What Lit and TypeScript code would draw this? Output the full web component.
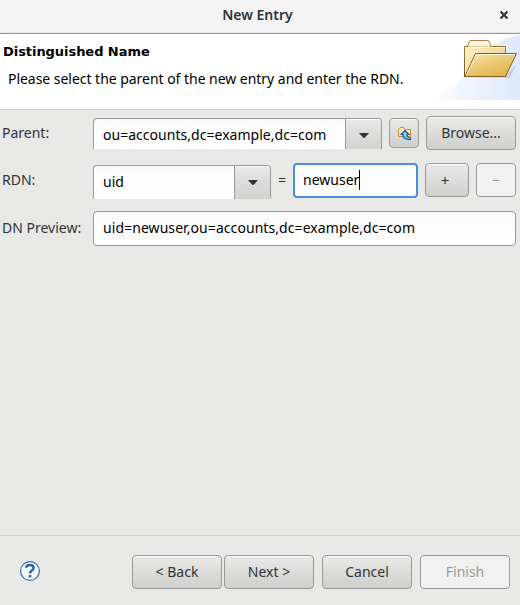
import { LitElement, html, css } from "lit";
import { customElement } from "lit/decorators.js";

const folderIcon = html`<svg class="folder" width="92" height="66" viewBox="-32 0 92 66">
  <defs>
    <linearGradient id="fb" x1="0" y1="0" x2="1" y2="1"><stop offset="0" stop-color="#fff4d2"/><stop offset="1" stop-color="#e9c878"/></linearGradient>
    <linearGradient id="ff" x1="0" y1="0" x2="0.6" y2="1"><stop offset="0" stop-color="#fae8ae"/><stop offset="0.5" stop-color="#edcb77"/><stop offset="1" stop-color="#e2b44e"/></linearGradient>
    <linearGradient id="wash" gradientUnits="userSpaceOnUse" x1="-32" y1="0" x2="60" y2="0"><stop offset="0" stop-color="#f5f8fe" stop-opacity="0"/><stop offset="0.35" stop-color="#f1f5fd"/><stop offset="1" stop-color="#dfe7f9"/></linearGradient>
    <linearGradient id="fl" x1="0" y1="0" x2="0" y2="1"><stop offset="0" stop-color="#a68845"/><stop offset="1" stop-color="#72520f"/></linearGradient>
  </defs>
  <path d="M-32 66V63C-20 61 -8 56 0 46C14 28 34 4 60 1V66Z" fill="url(#wash)"/>
  <path d="M3 43.500H45L57 29L50 44H4Z" fill="#9a8a7a" opacity=".3"/>
  <path d="M4.500 42.500V12.500H7.500L9 8Q9.500 6.500 11 6.500H27.500Q29 6.500 29.500 8L31 12.500H45.500V42.500Z" fill="url(#fb)" stroke="url(#fl)"/>
  <path d="M8.500 11.500L10 8.500Q10.500 7.500 12 7.500H27Q28.500 7.500 29 9L30 11.500Z" fill="#fff8ea"/>
  <path d="M31 12.500H45M5 12.500H8" stroke="#907031"/>
  <path d="M8 12.500H31" stroke="#e6ce91"/>
  <path d="M5.500 41V13.500H44.500" fill="none" stroke="#fff4cf"/>
  <path d="M4.800 42.500L15.500 19.500H56.500L45.500 42.500Z" fill="url(#ff)" stroke="#80601c" stroke-linejoin="round"/>
  <path d="M6.500 41L16.300 20.500H55" fill="none" stroke="#fff9e2"/>
</svg>`;

const parentIcon = html`<svg width="16" height="16" viewBox="0 0 16 16">
  <path d="M1.500 11.500V4L3 2.500H6.500L8 4.500H13.500V11.500Z" fill="#fde6a8" stroke="#cc8b33"/>
  <path d="M2 5.500H13" stroke="#fff8de"/>
  <path d="M8 5.300L12 9.500H10.300V11Q10.600 12.500 13.500 13V14.500Q6.500 15 5.800 11V9.500H4Z" fill="#69b3d4" stroke="#24619c" stroke-width="1.200"/>
  <path d="M8 7.500V11" stroke="#b5e6ef"/>
</svg>`;

const helpIcon = html`<svg width="20" height="20" viewBox="0 0 20 20">
  <circle cx="10" cy="10" r="9.400" fill="#f5f9fc" stroke="#3a70a8" stroke-width="1.200"/>
  <path d="M6.300 6.700V5.500Q7.500 4 10 4Q13.600 4 13.600 6.900Q13.600 8.500 11.700 9.600Q10 10.600 10 12.600" fill="none" stroke="#2866a2" stroke-width="2.400"/>
  <rect x="8.600" y="14" width="2.800" height="2.500" rx=".8" fill="#2866a2"/>
</svg>`;

const arrow = html`<svg width="10" height="5" viewBox="0 0 10 5"><path d="M0 0H10L5.500 5H4.500Z" fill="#2e3436"/></svg>`;

@customElement("app-root")
export class AppRoot extends LitElement {
  static styles = css`
    :host { display: flex; flex-direction: column; width: 520px; height: 605px; background: #e8e8e7; overflow: hidden;
      font: 14px/20px "Noto Sans", sans-serif; color: #2e3436; }
    * { box-sizing: border-box; }
    svg { display: block; flex: none; }
    .title { height: 34px; flex: none; display: grid; grid-template-columns: 1fr auto 1fr; align-items: center; padding: 0 11px 4px 6px;
      background: linear-gradient(#f3f3f3 0 31px, #e2e2e2 33px, #949494 33px); }
    .title b { grid-column: 2; font-weight: 600; }
    .title svg { justify-self: end; }
    .banner { height: 76px; flex: none; display: flex; justify-content: space-between; background: #fff; border-bottom: 1px solid #cfcfcf; color: #000; }
    .copy { padding: 8px 0 0 3px; white-space: nowrap; }
    .heading { font: bold 13px/20px "DejaVu Sans", sans-serif; letter-spacing: -0.05px; }
    .message { padding: 7px 0 0 5px; letter-spacing: -0.035px; }
    .form { flex: 1; padding: 6px 4px 0 2px; }
    .row { display: flex; align-items: flex-start; }
    .row.parent { height: 47px; }
    .row.rdn { height: 48px; }
    .label { width: 91px; flex: none; padding-top: 7px; white-space: nowrap; }
    .field { height: 35px; border: 1px solid #989898; border-radius: 4px; background: linear-gradient(#f6f6f6, #fcfcfc 4px, #fff); color: #000; padding: 6px 9px; white-space: nowrap; }
    .combo { display: flex; margin-top: 2px; border: 1px solid #989898; border-bottom: 0; border-radius: 4px 4px 0 0; background: linear-gradient(#f6f6f6, #fcfcfc 4px, #fff); color: #000; overflow: hidden; }
    .combo.wide { width: 289px; height: 31px; }
    .combo.short { width: 178px; height: 34px; border-radius: 4px 4px 2px 2px; }
    .value { flex: 1; padding: 6px 0 0 9px; white-space: nowrap; letter-spacing: 0.03px; }
    .drop { width: 36px; border-left: 1px solid #989898; display: flex; justify-content: center; padding-top: 14px; background: linear-gradient(#fff 0 1px, #e7e7e6 1px, #cfcfce 34px); }
    .btn { height: 34px; flex: none; display: flex; justify-content: center; align-items: center; border: 1px solid #989896; border-radius: 4px;
      background: linear-gradient(#fafafa 0 1px, #e8e8e7 1px, #cfcfce); white-space: nowrap; }
    .btn.disabled { background: #f1f1f1; color: #92958f; text-shadow: 0 1px #fff; }
    .icon { width: 30px; height: 30px; margin: 2px 0 0 7px; padding: 0 0 0 2px; }
    .browse { width: 90px; margin-left: 7px; }
    .equals { width: 22px; text-align: center; padding-top: 7px; }
    .focus { width: 125px; border: 2px solid #4a90d9; padding: 4px 8px 6px; display: flex; align-items: center; }
    .focus .caret { width: 1px; height: 20px; background: #000; }
    .plus { width: 44px; margin-left: 7px; padding-right: 4px; font-size: 15px; }
    .minus { width: 40px; margin-left: 7px; }
    .preview { flex: 1; letter-spacing: 0.07px; }
    .footer { height: 70px; flex: none; border-top: 1px solid #cfcfcf; display: flex; align-items: flex-start; padding: 19px 10px 0 20px; }
    .footer svg { margin-top: 6px; }
    .actions { margin-left: auto; display: flex; }
    .actions .btn { width: 90px; }
    .next { margin-left: 2px; }
    .gap { margin-left: 8px; }
  `;

  render() {
    return html`
      <div class="title"><b>New Entry</b>
        <svg width="10" height="10" viewBox="0 0 10 10"><path d="M1.500 1.500L8.500 8.500M8.500 1.500L1.500 8.500" stroke="#2e3436" stroke-width="2.200"/></svg>
      </div>
      <div class="banner">
        <div class="copy">
          <div class="heading">Distinguished Name</div>
          <div class="message">Please select the parent of the new entry and enter the RDN.</div>
        </div>
        ${folderIcon}
      </div>
      <div class="form">
        <div class="row parent">
          <div class="label">Parent:</div>
          <div class="combo wide"><div class="value">ou=accounts,dc=example,dc=com</div><div class="drop">${arrow}</div></div>
          <div class="btn icon">${parentIcon}</div>
          <div class="btn browse">Browse...</div>
        </div>
        <div class="row rdn">
          <div class="label">RDN:</div>
          <div class="combo short"><div class="value">uid</div><div class="drop">${arrow}</div></div>
          <div class="equals">=</div>
          <div class="field focus"><span>newuser</span><i class="caret"></i></div>
          <div class="btn plus">+</div>
          <div class="btn minus disabled">−</div>
        </div>
        <div class="row">
          <div class="label">DN Preview:</div>
          <div class="field preview">uid=newuser,ou=accounts,dc=example,dc=com</div>
        </div>
      </div>
      <div class="footer">
        ${helpIcon}
        <div class="actions">
          <div class="btn">&lt; Back</div>
          <div class="btn next">Next &gt;</div>
          <div class="btn gap">Cancel</div>
          <div class="btn gap disabled">Finish</div>
        </div>
      </div>
    `;
  }
}
